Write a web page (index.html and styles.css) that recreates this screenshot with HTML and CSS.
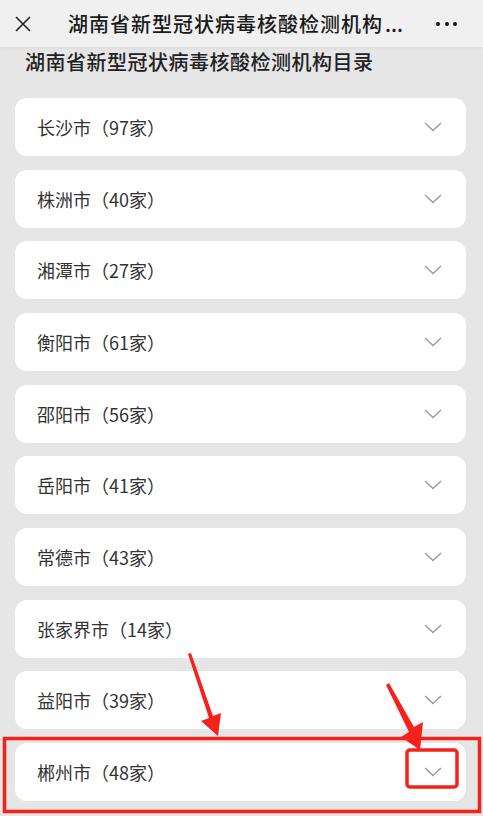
FILE: index.html
```html
<!DOCTYPE html>
<html lang="zh-CN">
<head>
  <meta charset="UTF-8" />
  <title>湖南省新型冠状病毒核酸检测机构目录</title>
  <link rel="stylesheet" href="styles.css">
</head>
<body>

<div class="topbar">
  <svg class="close" width="18" height="18" viewBox="0 0 18 18">
    <path d="M2 2 L16 16 M16 2 L2 16" stroke="#222" stroke-width="1.6" fill="none"/>
  </svg>
  <div class="topbar-title">湖南省新型冠状病毒核酸检测机构<span class="dots">...</span></div>
  <div class="more"><i></i><i></i><i></i></div>
</div>

<div class="page">
  <h2 class="heading">湖南省新型冠状病毒核酸检测机构目录</h2>

  <div class="list">
    <div class="item"><span>长沙市（97家）</span><svg class="chev" width="18" height="10" viewBox="0 0 18 10"><path d="M1 1 L9 8.5 L17 1" /></svg></div>
    <div class="item"><span>株洲市（40家）</span><svg class="chev" width="18" height="10" viewBox="0 0 18 10"><path d="M1 1 L9 8.5 L17 1" /></svg></div>
    <div class="item"><span>湘潭市（27家）</span><svg class="chev" width="18" height="10" viewBox="0 0 18 10"><path d="M1 1 L9 8.5 L17 1" /></svg></div>
    <div class="item"><span>衡阳市（61家）</span><svg class="chev" width="18" height="10" viewBox="0 0 18 10"><path d="M1 1 L9 8.5 L17 1" /></svg></div>
    <div class="item"><span>邵阳市（56家）</span><svg class="chev" width="18" height="10" viewBox="0 0 18 10"><path d="M1 1 L9 8.5 L17 1" /></svg></div>
    <div class="item"><span>岳阳市（41家）</span><svg class="chev" width="18" height="10" viewBox="0 0 18 10"><path d="M1 1 L9 8.5 L17 1" /></svg></div>
    <div class="item"><span>常德市（43家）</span><svg class="chev" width="18" height="10" viewBox="0 0 18 10"><path d="M1 1 L9 8.5 L17 1" /></svg></div>
    <div class="item"><span>张家界市（14家）</span><svg class="chev" width="18" height="10" viewBox="0 0 18 10"><path d="M1 1 L9 8.5 L17 1" /></svg></div>
    <div class="item"><span>益阳市（39家）</span><svg class="chev" width="18" height="10" viewBox="0 0 18 10"><path d="M1 1 L9 8.5 L17 1" /></svg></div>
    <div class="item"><span>郴州市（48家）</span><svg class="chev" width="18" height="10" viewBox="0 0 18 10"><path d="M1 1 L9 8.5 L17 1" /></svg></div>
  </div>
</div>

<!-- red annotation marks drawn over the screenshot -->
<svg class="marks" width="483" height="816" viewBox="0 0 483 816">
  <rect x="4.5" y="738.5" width="475" height="73" fill="none" stroke="#f5221b" stroke-width="3.5"/>
  <rect x="407" y="750" width="50" height="37" rx="3" fill="none" stroke="#f5221b" stroke-width="3.5"/>
  <polygon points="188,654 191,653 213,716 221,713 218,736 201,721 209,718" fill="#f5221b"/>
  <polygon points="386,685 389,683 414,727 423,722 420,750 401,737 409,732" fill="#f5221b"/>
</svg>

</body>
</html>
```

FILE: styles.css
```css
body {
  margin: 0;
  padding: 0;
  background: #e6e6e6;
  font-family: "Noto Sans CJK SC", "Noto Sans", sans-serif;
  color: #222;
  position: relative;
  height: 816px;
  overflow: hidden;
}

.topbar {
  height: 47px;
  background: #f0f0f0;
  display: flex;
  align-items: center;
  padding: 0 0 0 14px;
  box-shadow: 0 2px 3px rgba(0, 0, 0, 0.03);
}

.close {
  flex: none;
}

.topbar-title {
  margin-left: 36px;
  font-size: 20px;
  font-weight: 500;
  letter-spacing: 1px;
  color: #1a1a1a;
  white-space: nowrap;
}

.topbar-title .dots {
  letter-spacing: 0;
  margin-left: 2px;
}

.more {
  margin-left: auto;
  margin-right: 26px;
  display: flex;
  gap: 4.5px;
}

.more i {
  display: block;
  width: 4px;
  height: 4px;
  border-radius: 50%;
  background: #111;
}

.page {
  padding: 0 17px 0 15px;
}

.heading {
  margin: 0 0 21px 10px;
  height: 30px;
  line-height: 30px;
  font-size: 20px;
  font-weight: 500;
  letter-spacing: 0.5px;
  color: #222;
}

.list {
  display: flex;
  flex-direction: column;
  gap: 13.67px;
}

.item {
  height: 58px;
  background: #fff;
  border-radius: 12px;
  display: flex;
  align-items: center;
  justify-content: space-between;
  padding: 0 24px 0 22px;
  font-size: 18px;
  color: #333;
}

.chev path {
  fill: none;
  stroke: #9a9a9a;
  stroke-width: 1.4;
}

.marks {
  position: absolute;
  left: 0;
  top: 0;
  pointer-events: none;
}
```
